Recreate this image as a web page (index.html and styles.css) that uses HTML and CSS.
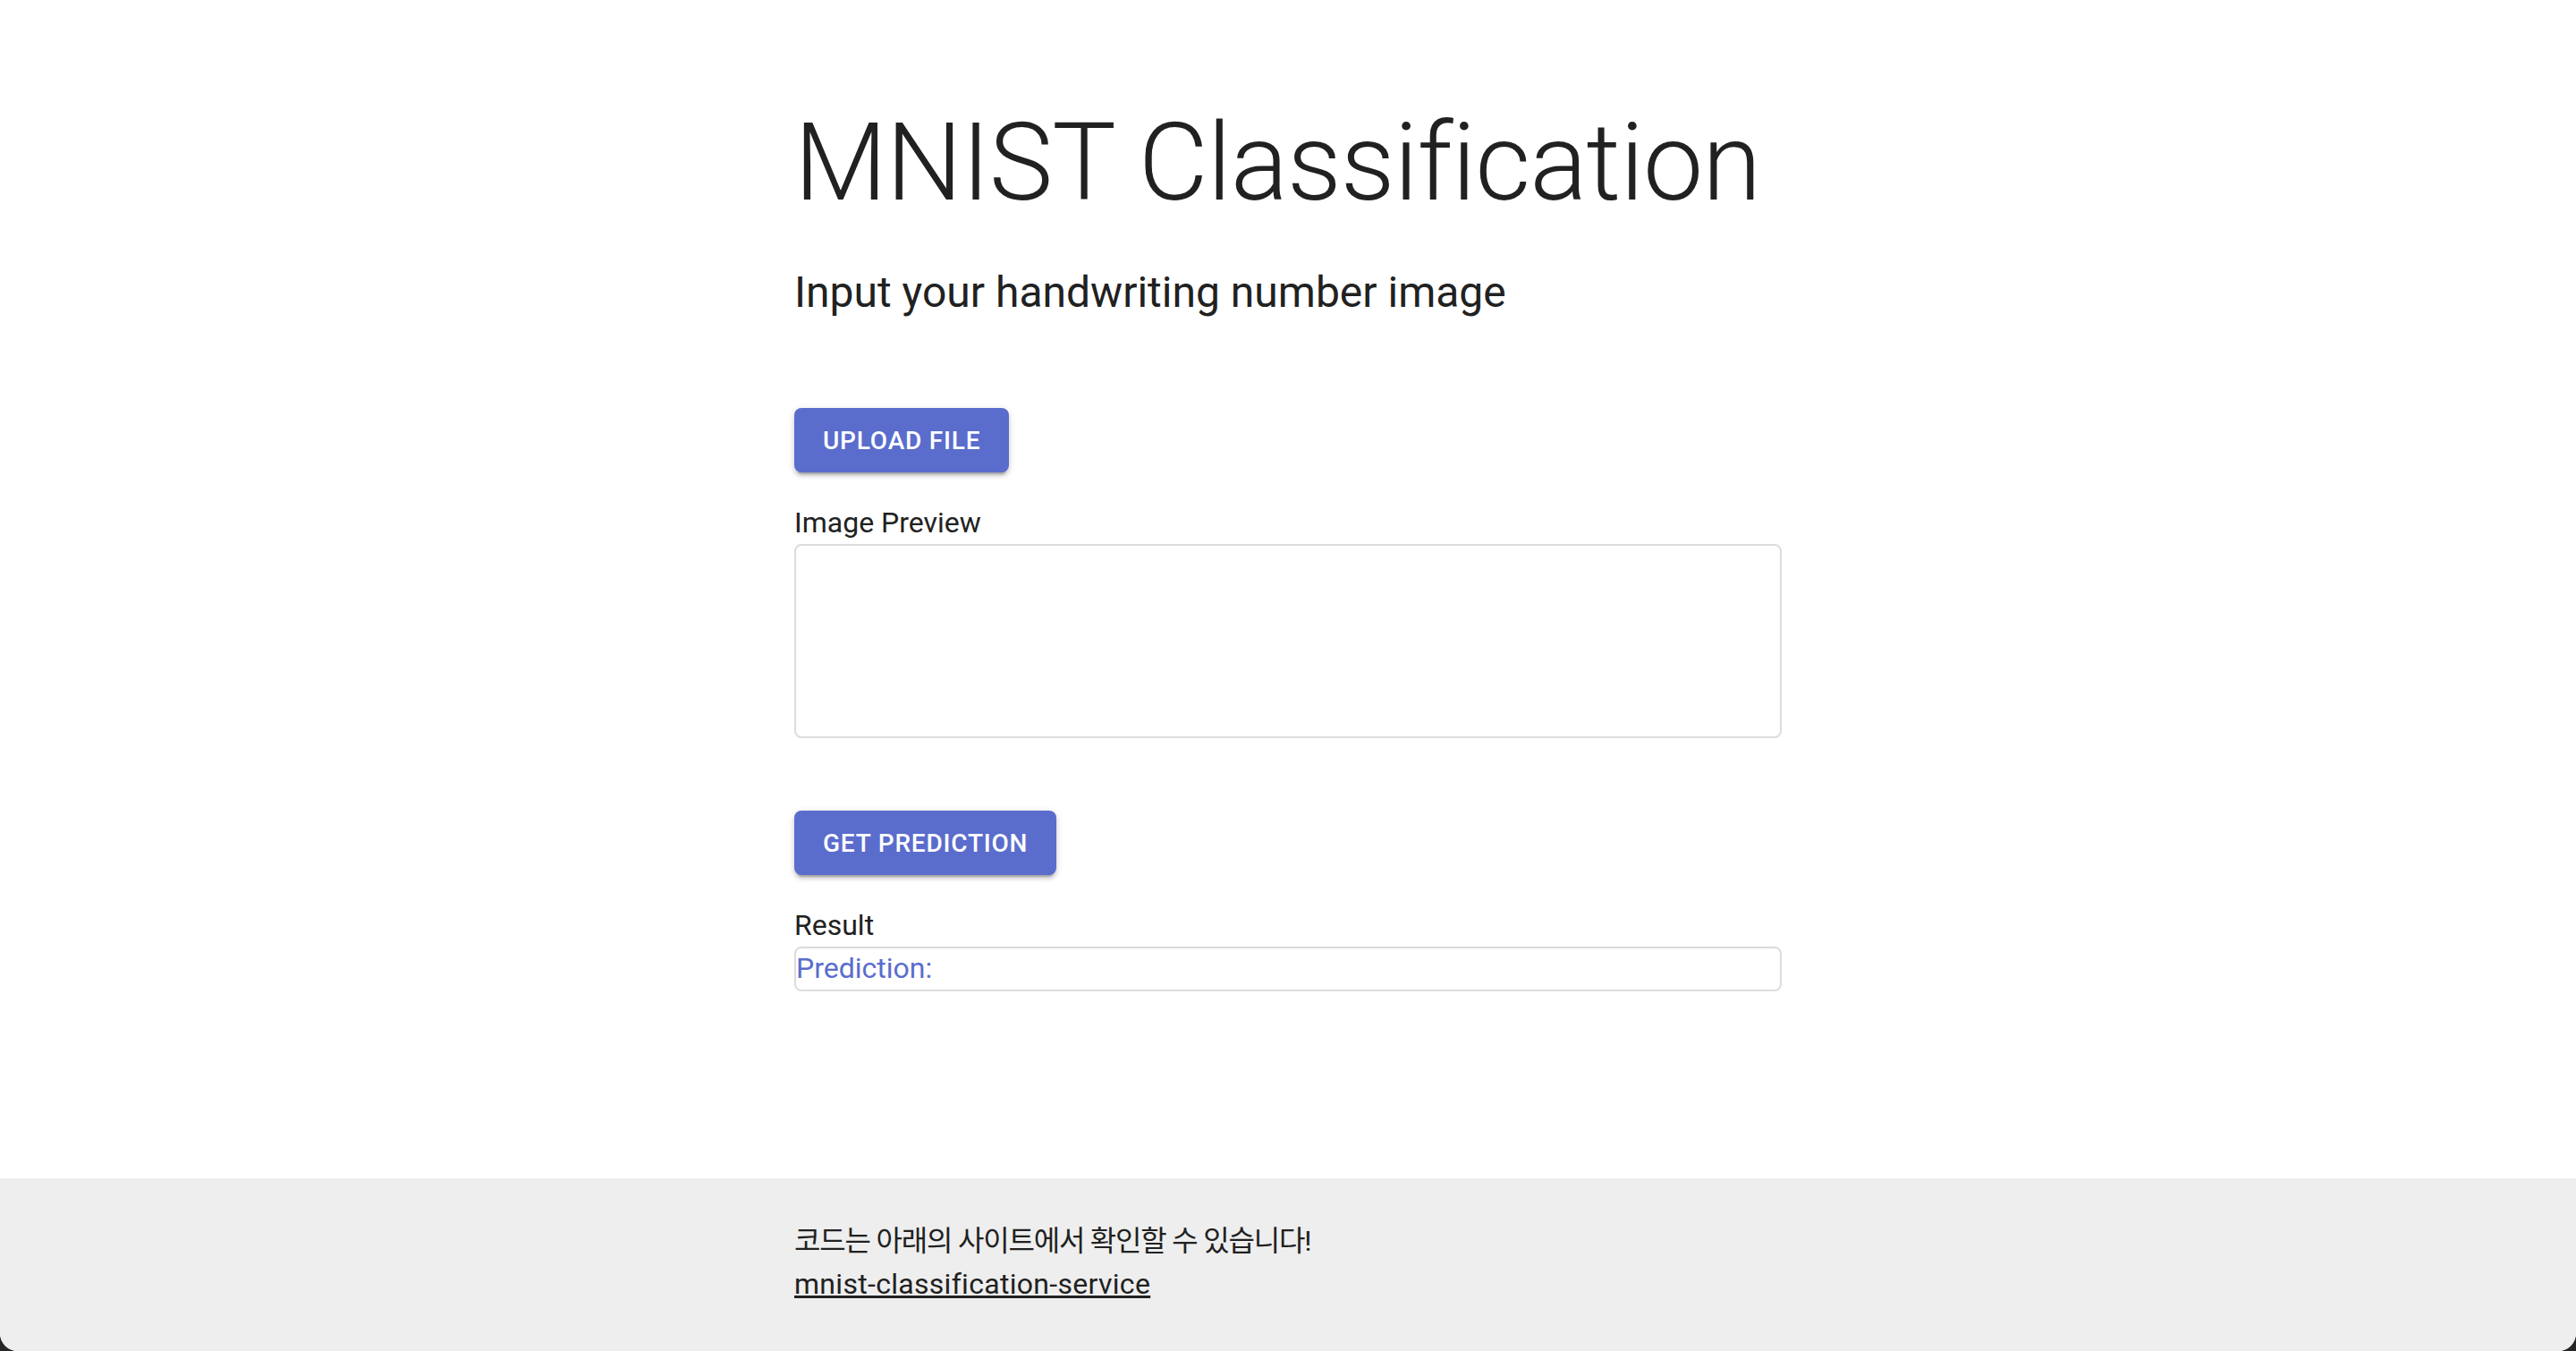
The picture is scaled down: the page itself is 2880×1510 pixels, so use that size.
FILE: index.html
```html
<!DOCTYPE html>
<html lang="ko">
<head>
<meta charset="utf-8">
<title>MNIST Classification</title>
<link rel="stylesheet" href="styles.css">
</head>
<body>
<main class="main">
  <div class="container">
    <h1 class="title">MNIST Classification</h1>
    <h2 class="subtitle">Input your handwriting number image</h2>
    <button class="btn btn-upload" type="button">Upload File</button>
    <p class="label">Image Preview</p>
    <div class="preview"></div>
    <button class="btn btn-predict" type="button">Get Prediction</button>
    <p class="label">Result</p>
    <div class="result">Prediction:</div>
  </div>
</main>
<footer class="footer">
  <div class="container">
    <p class="foot-line foot-ko">코드는 아래의 사이트에서 확인할 수 있습니다!</p>
    <p class="foot-line"><a class="foot-link" href="#">mnist-classification-service</a></p>
  </div>
</footer>
</body>
</html>
```

FILE: styles.css
```css
html {
  background: #262626;
  height: 100%;
}
body {
  margin: 0;
  min-height: 100vh;
  display: flex;
  flex-direction: column;
  background: #ffffff;
  border-radius: 0 0 20px 20px;
  overflow: hidden;
  font-family: Roboto, "Noto Sans CJK KR", "Noto Sans", sans-serif;
  color: #212121;
}
.container {
  width: 1104px;
  margin: 0 auto;
}
.main {
  padding-top: 110px;
}
.title {
  margin: 0;
  font-size: 120px;
  line-height: 144px;
  font-weight: 300;
  letter-spacing: -1px;
  white-space: nowrap;
}
.subtitle {
  margin: 41px 0 0;
  font-size: 48px;
  line-height: 64px;
  font-weight: 400;
}
.btn {
  display: flex;
  align-items: center;
  height: 72px;
  padding: 0 32px;
  border: 0;
  border-radius: 8px;
  background: #5a6dcd;
  color: #ffffff;
  font-family: Roboto, sans-serif;
  font-size: 28px;
  font-weight: 500;
  letter-spacing: 0.8px;
  text-transform: uppercase;
  box-shadow: 0 6px 2px -4px rgba(0,0,0,0.2), 0 4px 4px 0 rgba(0,0,0,0.14), 0 2px 10px 0 rgba(0,0,0,0.12);
}
.btn-upload {
  margin-top: 97px;
}
.btn-predict {
  margin-top: 81px;
}
.label {
  margin: 32px 0 0;
  font-size: 32px;
  line-height: 48px;
}
.preview {
  box-sizing: border-box;
  height: 217px;
  border: 2px solid #dcdcdc;
  border-radius: 8px;
}
.result {
  box-sizing: border-box;
  height: 50px;
  border: 2px solid #dcdcdc;
  border-radius: 8px;
  font-size: 32px;
  line-height: 45.76px;
  color: #5a6dcd;
}
.footer {
  margin-top: auto;
  background: #eeeeee;
  padding: 46px 0 51px;
}
.foot-line {
  margin: 0;
  font-size: 32px;
  line-height: 48px;
}
.foot-ko {
  letter-spacing: -1.2px;
}
.foot-link {
  color: #212121;
  text-decoration: underline;
  letter-spacing: 0.3px;
}
```
